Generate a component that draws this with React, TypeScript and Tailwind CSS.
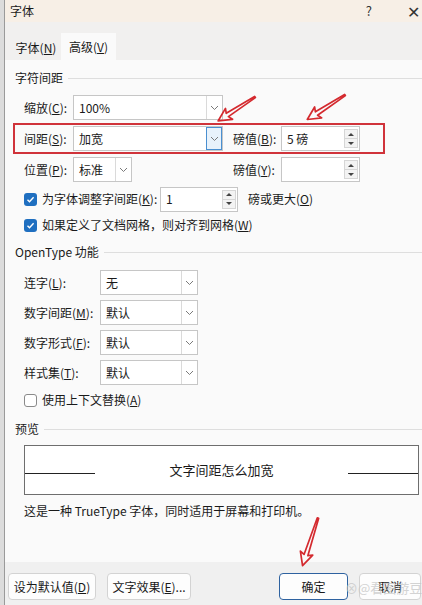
import type { ReactNode } from 'react'

const FONT = "font-['Microsoft_YaHei','Noto_Sans_CJK_SC',sans-serif]"

function Chevron() {
  return (
    <svg width="9" height="6" viewBox="0 0 9 6" fill="none" stroke="#7a7a7a" strokeWidth="1">
      <path d="M1 1l3.5 3.5L8 1" />
    </svg>
  )
}

function Select({ value, width, active }: { value: string; width: string; active?: boolean }) {
  return (
    <div className={`flex h-[25px] ${width} items-stretch border border-[#c6c6c6] bg-white`}>
      <div className="flex flex-1 items-center pl-[5px] text-[12px] text-[#1a1a1a]">{value}</div>
      <div
        className={
          active
            ? 'flex w-[16px] items-center justify-center border border-[#4a8fd0] bg-[#e8f2fb]'
            : 'flex w-[16px] items-center justify-center border-l border-[#dadada]'
        }
      >
        <Chevron />
      </div>
    </div>
  )
}

function Spin({ value, width }: { value: string; width: string }) {
  return (
    <div className={`flex h-[25px] ${width} items-stretch border border-[#c6c6c6] bg-white`}>
      <div className="flex flex-1 items-center pl-[5px] text-[12px] text-[#1a1a1a]">{value}</div>
      <div className="my-[2px] mr-[1px] flex w-[14px] flex-col border border-[#d6d6d6] bg-[#f3f3f3]">
        <div className="flex flex-1 items-center justify-center border-b border-[#d6d6d6]">
          <div className="h-0 w-0 border-x-[3px] border-b-[3px] border-x-transparent border-b-[#444]" />
        </div>
        <div className="flex flex-1 items-center justify-center">
          <div className="h-0 w-0 border-x-[3px] border-t-[3px] border-x-transparent border-t-[#444]" />
        </div>
      </div>
    </div>
  )
}

function Check({ checked }: { checked?: boolean }) {
  if (!checked) {
    return <div className="h-[13px] w-[13px] rounded-[3px] border border-[#8a8a8a] bg-white" />
  }
  return (
    <div className="flex h-[13px] w-[13px] items-center justify-center rounded-[3px] bg-[#1f6fc0]">
      <svg width="9" height="9" viewBox="0 0 9 9" fill="none" stroke="white" strokeWidth="1.4">
        <path d="M1.5 4.7l2 2L7.6 2.3" />
      </svg>
    </div>
  )
}

function Header({ children, className = '' }: { children: ReactNode; className?: string }) {
  return (
    <div className={`flex h-[14px] items-center pl-[10px] ${className}`}>
      <span className="text-[12px] text-[#1a1a1a]">{children}</span>
      <div className="ml-[5px] h-px flex-1 bg-[#dedede]" />
    </div>
  )
}

function Label({ children, w }: { children: ReactNode; w: string }) {
  return <div className={`${w} text-[12px] text-[#1a1a1a]`}>{children}</div>
}

function Arrow({ x, y, len, angle }: { x: number; y: number; len: number; angle: number }) {
  const L = len
  const pts = `0,-0.7 ${L - 11},-2 ${L - 13},-6.5 ${L},0 ${L - 13},6.5 ${L - 11},2 0,0.7`
  return (
    <polygon
      points={pts}
      transform={`translate(${x} ${y}) rotate(${angle})`}
      fill="none"
      stroke="#d42a2f"
      strokeWidth="1.7"
      strokeLinejoin="round"
    />
  )
}

function Button({ children, width, primary }: { children: ReactNode; width: string; primary?: boolean }) {
  return (
    <div
      className={`flex h-[27px] ${width} items-center justify-center rounded-[4px] border bg-[#fdfdfd] text-[12px] text-[#1a1a1a] ${
        primary ? 'border-[#2e62a0]' : 'border-[#d3d3d3]'
      }`}
    >
      {children}
    </div>
  )
}

export default function App() {
  return (
    <div className={`relative h-[605px] w-[422px] overflow-hidden bg-[#dcdcdc] ${FONT}`}>
      <div className="ml-[4px] flex h-full flex-col border-l border-[#9a9a9a] bg-[#f0f0f0]">
        {/* title bar */}
        <div className="flex h-[22px] items-center bg-[#f7efe6] pl-[5px]">
          <span className="text-[12px] text-[#1a1a1a]">字体</span>
          <span className="ml-auto mr-[35px] text-[13px] text-[#333]">?</span>
          <span className="mr-[2px] text-[16px] font-light text-[#333]">✕</span>
        </div>

        {/* tabs */}
        <div className="flex h-[38px] items-end bg-[#f1f0ef] pl-[6px]">
          <div className="flex h-[25px] w-[50px] items-center justify-center text-[12px] text-[#1a1a1a]">
            字体(<u>N</u>)
          </div>
          <div className="flex h-[27px] w-[55px] items-center justify-center bg-[#fafafa] text-[12px] text-[#1a1a1a]">
            高级(<u>V</u>)
          </div>
        </div>

        {/* panel */}
        <div className="flex h-[502px] w-[430px] flex-col bg-[#fafafa]">
          <Header className="mt-[11px]">字符间距</Header>

          <div className="mt-[10px] flex items-center pl-[19px]">
            <Label w="w-[49px]">缩放(<u>C</u>):</Label>
            <Select value="100%" width="w-[150px]" />
          </div>

          <div className="ml-[8px] mt-[3px] flex h-[31px] w-[372px] items-center border-2 border-[#d0333a] pl-[9px]">
            <Label w="w-[49px]">间距(<u>S</u>):</Label>
            <Select value="加宽" width="w-[150px]" active />
            <Label w="ml-[10px] w-[48px]">磅值(<u>B</u>):</Label>
            <Spin value="5 磅" width="w-[79px]" />
          </div>

          <div className="mt-[3px] flex items-center pl-[19px]">
            <Label w="w-[49px]">位置(<u>P</u>):</Label>
            <Select value="标准" width="w-[59px]" />
            <Label w="ml-[101px] w-[48px]">磅值(<u>Y</u>):</Label>
            <Spin value="" width="w-[79px]" />
          </div>

          <div className="mt-[5px] flex h-[24px] items-center pl-[19px]">
            <Check checked />
            <span className="ml-[5px] w-[118px] text-[12px] text-[#1a1a1a]">
              为字体调整字间距(<u>K</u>):
            </span>
            <Spin value="1" width="w-[78px]" />
            <span className="ml-[10px] text-[12px] text-[#1a1a1a]">
              磅或更大(<u>O</u>)
            </span>
          </div>

          <div className="mt-[4px] flex h-[20px] items-center pl-[19px]">
            <Check checked />
            <span className="ml-[5px] text-[12px] text-[#1a1a1a]">
              如果定义了文档网格，则对齐到网格(<u>W</u>)
            </span>
          </div>

          <Header className="mt-[10px]">OpenType 功能</Header>

          <div className="mt-[11px] flex flex-col gap-[5px] pl-[19px]">
            {[
              ['连字', 'L', '无'],
              ['数字间距', 'M', '默认'],
              ['数字形式', 'F', '默认'],
              ['样式集', 'T', '默认'],
            ].map(([name, key, val]) => (
              <div key={key} className="flex items-center">
                <Label w="w-[76px]">
                  {name}(<u>{key}</u>):
                </Label>
                <Select value={val} width="w-[98px]" />
              </div>
            ))}
          </div>

          <div className="mt-[6px] flex h-[18px] items-center pl-[19px]">
            <Check />
            <span className="ml-[5px] text-[12px] text-[#1a1a1a]">
              使用上下文替换(<u>A</u>)
            </span>
          </div>

          <Header className="mt-[13px]">预览</Header>

          <div className="ml-[19px] mt-[9px] flex h-[50px] w-[395px] items-center border border-[#6e6e6e] bg-white">
            <div className="mt-[6px] h-px w-[70px] bg-[#222]" />
            <div className="flex-1 text-center text-[13px] text-[#1a1a1a]">文字间距怎么加宽</div>
            <div className="mt-[6px] h-px w-[70px] bg-[#222]" />
          </div>

          <div className="mt-[7px] pl-[19px] text-[12px] text-[#1a1a1a]">
            这是一种 TrueType 字体，同时适用于屏幕和打印机。
          </div>
        </div>

        {/* footer */}
        <div className="mt-[11px] flex items-center pl-[3px]">
          <Button width="w-[88px]">
            设为默认值(<u>D</u>)
          </Button>
          <div className="ml-[11px]">
            <Button width="w-[84px]">
              文字效果(<u>E</u>)...
            </Button>
          </div>
          <div className="ml-[88px]">
            <Button width="w-[69px]" primary>
              确定
            </Button>
          </div>
          <div className="relative ml-[11px]">
            <Button width="w-[62px]">取消</Button>
            <span className="absolute left-[-14px] top-[5px] whitespace-nowrap text-[13px] text-[#c9c9c9] opacity-80">
              ⊗@看图游豆
            </span>
          </div>
        </div>
      </div>

      <svg className="pointer-events-none absolute left-0 top-0" width="422" height="605">
        <Arrow x={255} y={97} len={44} angle={147} />
        <Arrow x={345} y={95} len={45} angle={147} />
        <Arrow x={318} y={518} len={50} angle={108} />
      </svg>
    </div>
  )
}
